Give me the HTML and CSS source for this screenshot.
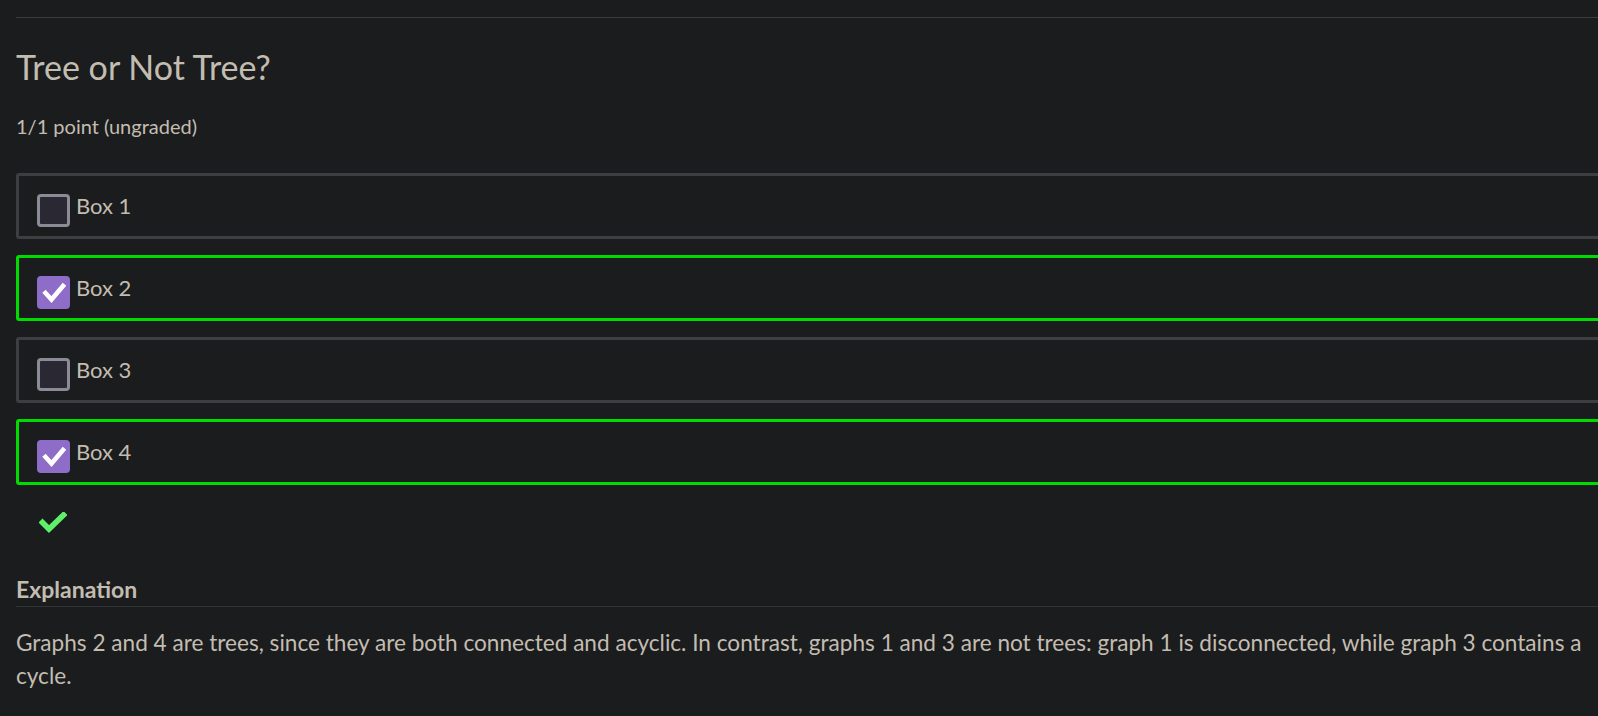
FILE: index.html
```html
<!DOCTYPE html>
<html lang="en">
<head>
<meta charset="utf-8">
<title>Tree or Not Tree?</title>
<link rel="stylesheet" href="styles.css">
</head>
<body>
<main class="problem">
  <div class="rule"></div>
  <h2 class="title">Tree or Not Tree?</h2>
  <div class="points">1/1 point (ungraded)</div>
  <div class="choices">
    <label class="choice">
      <span class="box"></span>
      <span class="label">Box 1</span>
    </label>
    <label class="choice correct">
      <span class="box checked"><svg viewBox="0 0 33 33" width="33" height="33"><polyline points="8.5,17 14.5,23.5 26,10" fill="none" stroke="#fff" stroke-width="4.6" stroke-linecap="square" stroke-linejoin="miter"/></svg></span>
      <span class="label">Box 2</span>
    </label>
    <label class="choice">
      <span class="box"></span>
      <span class="label">Box 3</span>
    </label>
    <label class="choice correct">
      <span class="box checked"><svg viewBox="0 0 33 33" width="33" height="33"><polyline points="8.5,17 14.5,23.5 26,10" fill="none" stroke="#fff" stroke-width="4.6" stroke-linecap="square" stroke-linejoin="miter"/></svg></span>
      <span class="label">Box 4</span>
    </label>
  </div>
  <div class="status">
    <svg viewBox="0 0 28 21" width="28" height="21"><polyline points="3.5,10.5 10,17 24.5,3" fill="none" stroke="#5ef06a" stroke-width="5.6" stroke-linecap="square" stroke-linejoin="miter"/></svg>
  </div>
  <h3 class="expl-title">Explanation</h3>
  <p class="expl-text">Graphs 2 and 4 are trees, since they are both connected and acyclic. In contrast, graphs 1 and 3 are not trees: graph 1 is disconnected, while graph 3 contains a cycle.</p>
</main>
</body>
</html>
```

FILE: styles.css
```css
html, body {
  margin: 0;
  padding: 0;
  overflow: hidden;
  background: #1b1c1e;
}

body {
  font-family: "Source Sans Pro", Lato, "Liberation Sans", sans-serif;
  color: #c3bdb1;
}

.problem {
  width: 1604px;
  padding: 17px 0 0 16px;
}

.rule {
  height: 0;
  border-top: 1px solid #3a3b3e;
}

.title {
  margin: 27px 0 0;
  font-size: 34px;
  font-weight: 400;
  line-height: 44px;
  color: #c3bdb1;
}

.points {
  margin-top: 23px;
  font-size: 20px;
  line-height: 28px;
}

.choices {
  margin-top: 33px;
  display: flex;
  flex-direction: column;
  gap: 16px;
}

.choice {
  display: flex;
  align-items: center;
  height: 60px;
  border: 3px solid #3d3e41;
  border-radius: 3px;
  padding: 0 0 0 18px;
}

.choice.correct {
  border-color: #00dc00;
}

.box {
  box-sizing: border-box;
  width: 33px;
  height: 33px;
  margin-top: 8px;
  border: 3px solid #8c8b95;
  border-radius: 4px;
  background: #2a2833;
  flex: none;
}

.box.checked {
  border: none;
  background: #8e6dc9;
}

.box svg {
  display: block;
}

.label {
  margin-left: 6px;
  font-size: 22px;
  line-height: 30px;
}

.status {
  margin: 27px 0 0 23px;
  height: 21px;
}

.status svg {
  display: block;
}

.expl-title {
  margin: 42px 0 0;
  font-size: 23px;
  font-weight: 700;
  line-height: 28px;
  padding-bottom: 3px;
  border-bottom: 1px solid #323336;
}

.expl-text {
  margin: 19px 0 0;
  font-size: 22.6px;
  line-height: 33px;
  width: 1580px;
}
```
